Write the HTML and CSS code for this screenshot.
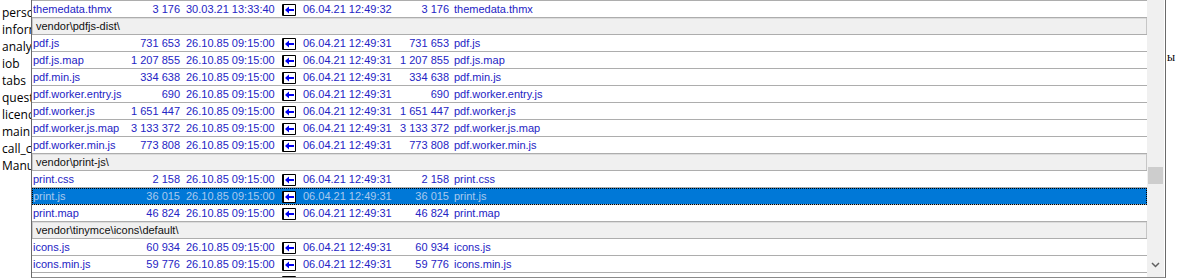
FILE: index.html
```html
<!DOCTYPE html>
<html lang="ru">
<head>
    <meta charset="UTF-8">
    <title>Синхронизация каталогов</title>
    <link rel="stylesheet" href="styles.css">
</head>
<body>
<div class="desk">
    <div class="behind">
        <div>personal</div>
        <div>information</div>
        <div>analytics</div>
        <div>iob</div>
        <div>tabs</div>
        <div>questions</div>
        <div>licence</div>
        <div>main</div>
        <div>call_center</div>
        <div>Manual</div>
    </div>

    <div class="win">
        <div class="list">
            <div class="row">
                <span class="n1">themedata.thmx</span><span class="s1">3 176</span><span class="d1">30.03.21 13:33:40</span>
                <span class="ic"><svg width="14" height="12" viewBox="0 0 14 12"><path d="M0.5 0.5H13.5V11.5H0.5Z" fill="#fff" stroke="#000"/><path d="M1.5 1V11" stroke="#000"/><path d="M3 6L7 2.5V9.5Z" fill="#0000f0"/><path d="M6.5 5H12V7H6.5Z" fill="#0000f0"/></svg></span>
                <span class="d2">06.04.21 12:49:32</span><span class="s2">3 176</span><span class="n2">themedata.thmx</span>
            </div>
            <div class="row grp">vendor\pdfjs-dist\</div>
            <div class="row">
                <span class="n1">pdf.js</span><span class="s1">731 653</span><span class="d1">26.10.85 09:15:00</span>
                <span class="ic"><svg width="14" height="12" viewBox="0 0 14 12"><path d="M0.5 0.5H13.5V11.5H0.5Z" fill="#fff" stroke="#000"/><path d="M1.5 1V11" stroke="#000"/><path d="M3 6L7 2.5V9.5Z" fill="#0000f0"/><path d="M6.5 5H12V7H6.5Z" fill="#0000f0"/></svg></span>
                <span class="d2">06.04.21 12:49:31</span><span class="s2">731 653</span><span class="n2">pdf.js</span>
            </div>
            <div class="row">
                <span class="n1">pdf.js.map</span><span class="s1">1 207 855</span><span class="d1">26.10.85 09:15:00</span>
                <span class="ic"><svg width="14" height="12" viewBox="0 0 14 12"><path d="M0.5 0.5H13.5V11.5H0.5Z" fill="#fff" stroke="#000"/><path d="M1.5 1V11" stroke="#000"/><path d="M3 6L7 2.5V9.5Z" fill="#0000f0"/><path d="M6.5 5H12V7H6.5Z" fill="#0000f0"/></svg></span>
                <span class="d2">06.04.21 12:49:31</span><span class="s2">1 207 855</span><span class="n2">pdf.js.map</span>
            </div>
            <div class="row">
                <span class="n1">pdf.min.js</span><span class="s1">334 638</span><span class="d1">26.10.85 09:15:00</span>
                <span class="ic"><svg width="14" height="12" viewBox="0 0 14 12"><path d="M0.5 0.5H13.5V11.5H0.5Z" fill="#fff" stroke="#000"/><path d="M1.5 1V11" stroke="#000"/><path d="M3 6L7 2.5V9.5Z" fill="#0000f0"/><path d="M6.5 5H12V7H6.5Z" fill="#0000f0"/></svg></span>
                <span class="d2">06.04.21 12:49:31</span><span class="s2">334 638</span><span class="n2">pdf.min.js</span>
            </div>
            <div class="row">
                <span class="n1">pdf.worker.entry.js</span><span class="s1">690</span><span class="d1">26.10.85 09:15:00</span>
                <span class="ic"><svg width="14" height="12" viewBox="0 0 14 12"><path d="M0.5 0.5H13.5V11.5H0.5Z" fill="#fff" stroke="#000"/><path d="M1.5 1V11" stroke="#000"/><path d="M3 6L7 2.5V9.5Z" fill="#0000f0"/><path d="M6.5 5H12V7H6.5Z" fill="#0000f0"/></svg></span>
                <span class="d2">06.04.21 12:49:31</span><span class="s2">690</span><span class="n2">pdf.worker.entry.js</span>
            </div>
            <div class="row">
                <span class="n1">pdf.worker.js</span><span class="s1">1 651 447</span><span class="d1">26.10.85 09:15:00</span>
                <span class="ic"><svg width="14" height="12" viewBox="0 0 14 12"><path d="M0.5 0.5H13.5V11.5H0.5Z" fill="#fff" stroke="#000"/><path d="M1.5 1V11" stroke="#000"/><path d="M3 6L7 2.5V9.5Z" fill="#0000f0"/><path d="M6.5 5H12V7H6.5Z" fill="#0000f0"/></svg></span>
                <span class="d2">06.04.21 12:49:31</span><span class="s2">1 651 447</span><span class="n2">pdf.worker.js</span>
            </div>
            <div class="row">
                <span class="n1">pdf.worker.js.map</span><span class="s1">3 133 372</span><span class="d1">26.10.85 09:15:00</span>
                <span class="ic"><svg width="14" height="12" viewBox="0 0 14 12"><path d="M0.5 0.5H13.5V11.5H0.5Z" fill="#fff" stroke="#000"/><path d="M1.5 1V11" stroke="#000"/><path d="M3 6L7 2.5V9.5Z" fill="#0000f0"/><path d="M6.5 5H12V7H6.5Z" fill="#0000f0"/></svg></span>
                <span class="d2">06.04.21 12:49:31</span><span class="s2">3 133 372</span><span class="n2">pdf.worker.js.map</span>
            </div>
            <div class="row">
                <span class="n1">pdf.worker.min.js</span><span class="s1">773 808</span><span class="d1">26.10.85 09:15:00</span>
                <span class="ic"><svg width="14" height="12" viewBox="0 0 14 12"><path d="M0.5 0.5H13.5V11.5H0.5Z" fill="#fff" stroke="#000"/><path d="M1.5 1V11" stroke="#000"/><path d="M3 6L7 2.5V9.5Z" fill="#0000f0"/><path d="M6.5 5H12V7H6.5Z" fill="#0000f0"/></svg></span>
                <span class="d2">06.04.21 12:49:31</span><span class="s2">773 808</span><span class="n2">pdf.worker.min.js</span>
            </div>
            <div class="row grp">vendor\print-js\</div>
            <div class="row">
                <span class="n1">print.css</span><span class="s1">2 158</span><span class="d1">26.10.85 09:15:00</span>
                <span class="ic"><svg width="14" height="12" viewBox="0 0 14 12"><path d="M0.5 0.5H13.5V11.5H0.5Z" fill="#fff" stroke="#000"/><path d="M1.5 1V11" stroke="#000"/><path d="M3 6L7 2.5V9.5Z" fill="#0000f0"/><path d="M6.5 5H12V7H6.5Z" fill="#0000f0"/></svg></span>
                <span class="d2">06.04.21 12:49:31</span><span class="s2">2 158</span><span class="n2">print.css</span>
            </div>
            <div class="row sel">
                <span class="n1">print.js</span><span class="s1">36 015</span><span class="d1">26.10.85 09:15:00</span>
                <span class="ic"><svg width="14" height="12" viewBox="0 0 14 12"><path d="M0.5 0.5H13.5V11.5H0.5Z" fill="#fff" stroke="#000"/><path d="M1.5 1V11" stroke="#000"/><path d="M3 6L7 2.5V9.5Z" fill="#0000f0"/><path d="M6.5 5H12V7H6.5Z" fill="#0000f0"/></svg></span>
                <span class="d2">06.04.21 12:49:31</span><span class="s2">36 015</span><span class="n2">print.js</span>
            </div>
            <div class="row">
                <span class="n1">print.map</span><span class="s1">46 824</span><span class="d1">26.10.85 09:15:00</span>
                <span class="ic"><svg width="14" height="12" viewBox="0 0 14 12"><path d="M0.5 0.5H13.5V11.5H0.5Z" fill="#fff" stroke="#000"/><path d="M1.5 1V11" stroke="#000"/><path d="M3 6L7 2.5V9.5Z" fill="#0000f0"/><path d="M6.5 5H12V7H6.5Z" fill="#0000f0"/></svg></span>
                <span class="d2">06.04.21 12:49:31</span><span class="s2">46 824</span><span class="n2">print.map</span>
            </div>
            <div class="row grp">vendor\tinymce\icons\default\</div>
            <div class="row">
                <span class="n1">icons.js</span><span class="s1">60 934</span><span class="d1">26.10.85 09:15:00</span>
                <span class="ic"><svg width="14" height="12" viewBox="0 0 14 12"><path d="M0.5 0.5H13.5V11.5H0.5Z" fill="#fff" stroke="#000"/><path d="M1.5 1V11" stroke="#000"/><path d="M3 6L7 2.5V9.5Z" fill="#0000f0"/><path d="M6.5 5H12V7H6.5Z" fill="#0000f0"/></svg></span>
                <span class="d2">06.04.21 12:49:31</span><span class="s2">60 934</span><span class="n2">icons.js</span>
            </div>
            <div class="row">
                <span class="n1">icons.min.js</span><span class="s1">59 776</span><span class="d1">26.10.85 09:15:00</span>
                <span class="ic"><svg width="14" height="12" viewBox="0 0 14 12"><path d="M0.5 0.5H13.5V11.5H0.5Z" fill="#fff" stroke="#000"/><path d="M1.5 1V11" stroke="#000"/><path d="M3 6L7 2.5V9.5Z" fill="#0000f0"/><path d="M6.5 5H12V7H6.5Z" fill="#0000f0"/></svg></span>
                <span class="d2">06.04.21 12:49:31</span><span class="s2">59 776</span><span class="n2">icons.min.js</span>
            </div>
            <div class="row">
                <span class="n1">index.js</span><span class="s1">1 212</span><span class="d1">26.10.85 09:15:00</span>
                <span class="ic"><svg width="14" height="12" viewBox="0 0 14 12"><path d="M0.5 0.5H13.5V11.5H0.5Z" fill="#fff" stroke="#000"/><path d="M1.5 1V11" stroke="#000"/><path d="M3 6L7 2.5V9.5Z" fill="#0000f0"/><path d="M6.5 5H12V7H6.5Z" fill="#0000f0"/></svg></span>
                <span class="d2">06.04.21 12:49:31</span><span class="s2">1 212</span><span class="n2">index.js</span>
            </div>
        </div>
        <div class="scroll">
            <div class="thumb"></div>
            <div class="down">
                <svg width="9" height="6" viewBox="0 0 9 6"><path d="M1 1L4.5 4.5L8 1" fill="none" stroke="#606060" stroke-width="1.5"/></svg>
            </div>
        </div>
    </div>

    <div class="behind-r">ы</div>
</div>
</body>
</html>
```

FILE: styles.css
```css
* {
    box-sizing: border-box;
}
body {
    margin: 0;
    background: #fff;
    font-family: "Liberation Sans", Arial, sans-serif;
}
.desk {
    display: flex;
    align-items: flex-start;
    height: 279px;
    overflow: hidden;
}
.behind {
    width: 31px;
    flex: none;
    overflow: hidden;
    padding: 4px 0 0 2px;
    font-family: "Open Sans", "Liberation Sans", sans-serif;
    font-size: 12px;
    line-height: 17px;
    white-space: nowrap;
    color: #000;
}
.win {
    width: 1135px;
    height: 278px;
    flex: none;
    display: flex;
    overflow: hidden;
    background: #fff;
    border-left: 1px solid #6a6a6a;
    border-right: 1px solid #6a6a6a;
    border-bottom: 1px solid #8a8a8a;
    padding-right: 1px;
}
.list {
    width: 1115px;
    flex: none;
    overflow: hidden;
    border-top: 1px solid #adadad;
}
.row {
    display: flex;
    height: 17px;
    padding-left: 1px;
    border-bottom: 1px solid #adadad;
    font-size: 11px;
    line-height: 16px;
    color: #2424c4;
    white-space: nowrap;
}
.n1 {
    width: 97px;
    overflow: hidden;
}
.s1 {
    width: 50px;
    text-align: right;
}
.d1 {
    width: 102px;
    padding-left: 6px;
}
.ic {
    width: 14px;
    height: 12px;
    margin-top: 3px;
    display: flex;
}
.d2 {
    width: 95px;
    padding-left: 7px;
}
.s2 {
    width: 58px;
    text-align: right;
}
.n2 {
    padding-left: 5px;
}
.grp {
    padding-left: 4px;
    color: #111;
    background: #f0f0f0;
    box-shadow: inset 1px 0 #c6c6c6, inset -1px 0 #c6c6c6, inset 0 1px #dcdcdc;
}
.sel {
    background: #0078d7;
    color: #a9c9ee;
    outline: 1px dotted #000;
    outline-offset: -1px;
}
.scroll {
    width: 17px;
    flex: none;
    display: flex;
    flex-direction: column;
    background: #f0f0f0;
}
.thumb {
    height: 17px;
    margin: 167px 1px 0;
    background: #cdcdcd;
}
.down {
    height: 17px;
    margin-top: auto;
    margin-bottom: 4px;
    display: flex;
    align-items: center;
    justify-content: center;
}
.behind-r {
    padding: 49px 0 0 1px;
    font-family: "Liberation Serif", serif;
    font-size: 12px;
    line-height: 17px;
    color: #000;
}
```
